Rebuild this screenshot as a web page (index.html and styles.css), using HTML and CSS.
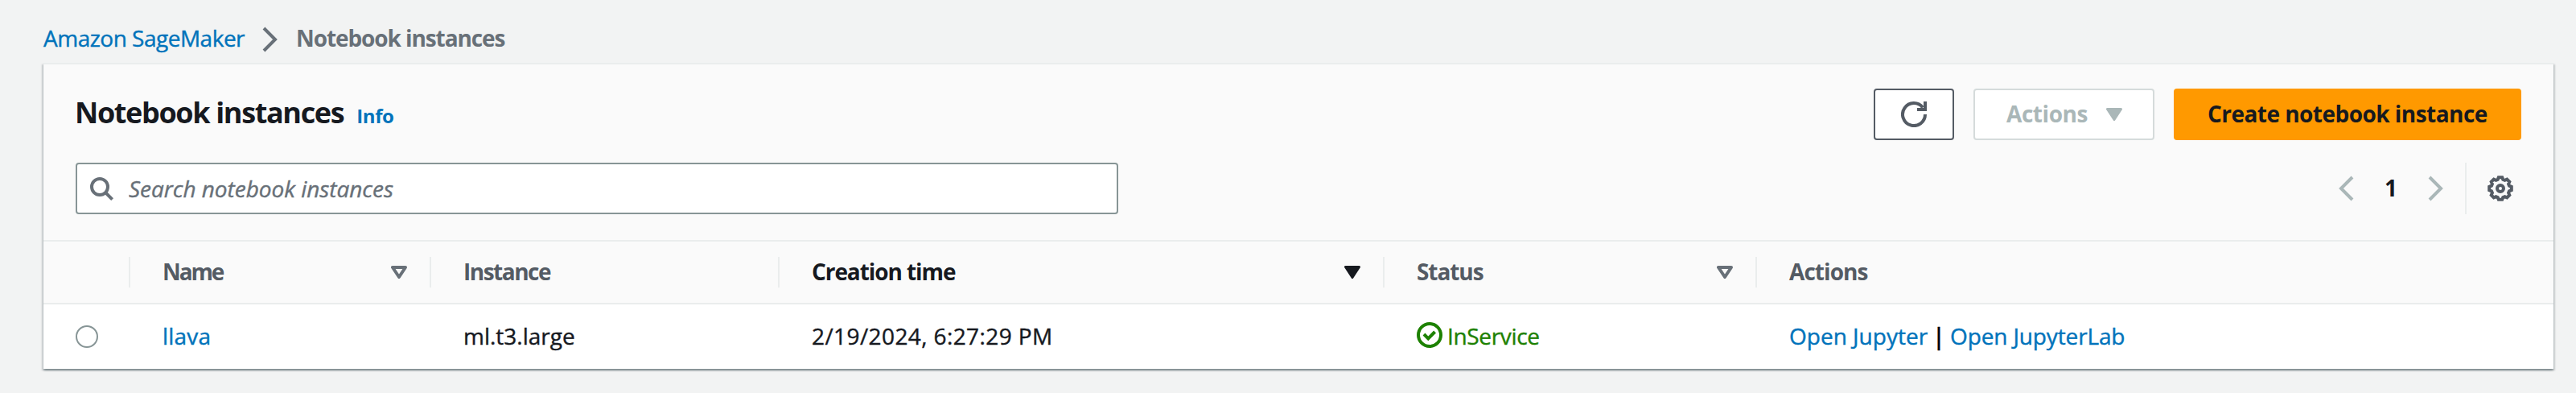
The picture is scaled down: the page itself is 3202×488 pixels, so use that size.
FILE: index.html
```html
<!DOCTYPE html>
<html lang="en">
<head>
<meta charset="utf-8">
<title>Notebook instances</title>
<link rel="stylesheet" href="styles.css">
</head>
<body>
<nav class="crumbs">
  <a class="crumb-link" href="#">Amazon SageMaker</a>
  <svg class="crumb-sep" width="20" height="32" viewBox="0 0 20 32"><path d="M3 2l14 14L3 30"/></svg>
  <span class="crumb-current">Notebook instances</span>
</nav>
<main class="panel">
  <header class="panel-head">
    <div class="title-row">
      <h1 class="title">Notebook instances</h1>
      <a class="info" href="#">Info</a>
      <div class="buttons">
        <button class="btn btn-refresh" aria-label="Refresh"><svg width="32" height="32" viewBox="0 0 32 32"><path d="M30 16A14 14 0 1 1 27 7.4M30 0v10H20"/></svg></button>
        <button class="btn btn-actions" disabled><span>Actions</span><svg width="20" height="16" viewBox="0 0 20 16"><path d="M1.5 1.5h17L10 14.5z"/></svg></button>
        <button class="btn btn-create"><span>Create notebook instance</span></button>
      </div>
    </div>
    <div class="tools-row">
      <label class="search">
        <svg width="32" height="32" viewBox="0 0 32 32"><circle cx="14" cy="14" r="10"/><path d="M21 21l8.6 8.6"/></svg>
        <input class="search-input" type="text" placeholder="Search notebook instances">
      </label>
      <div class="pager">
        <svg class="arrow" width="20" height="32" viewBox="0 0 20 32"><path d="M17 2L3 16l14 14"/></svg>
        <span class="page">1</span>
        <svg class="arrow" width="20" height="32" viewBox="0 0 20 32"><path d="M3 2l14 14L3 30"/></svg>
      </div>
      <div class="prefs">
        <svg width="32" height="32" viewBox="-16 -16 32 32"><path d="M13.8 2.2L11 3.3 10.1 5.5 11.3 8.2 8.2 11.3 5.5 10.1 3.3 11 2.2 13.8H-2.2L-3.3 11-5.5 10.1-8.2 11.3-11.3 8.2-10.1 5.5-11 3.3-13.8 2.2V-2.2L-11-3.3-10.1-5.5-11.3-8.2-8.2-11.3-5.5-10.1-3.3-11-2.2-13.8H2.2L3.3-11 5.5-10.1 8.2-11.3 11.3-8.2 10.1-5.5 11-3.3 13.8-2.2z"/><circle r="4"/></svg>
      </div>
    </div>
  </header>
  <div class="grid grid-head">
    <div class="th"></div>
    <div class="th"><span class="t-name">Name</span><svg class="sort" width="20" height="16" viewBox="0 0 20 16"><path d="M2 2h16l-8 12z"/></svg></div>
    <div class="th"><span class="t-instance">Instance</span></div>
    <div class="th th-sorted"><span class="t-created">Creation time</span><svg class="sort sort-on" width="20" height="16" viewBox="0 0 20 16"><path d="M1.5 1.5h17L10 14.5z"/></svg></div>
    <div class="th"><span class="t-status">Status</span><svg class="sort" width="20" height="16" viewBox="0 0 20 16"><path d="M2 2h16l-8 12z"/></svg></div>
    <div class="th"><span class="t-actions">Actions</span></div>
  </div>
  <div class="grid grid-row">
    <div class="td td-radio"><span class="radio"></span></div>
    <div class="td"><a class="link v-name" href="#">llava</a></div>
    <div class="td"><span>ml.t3.large</span></div>
    <div class="td"><span class="v-created">2/19/2024, 6:27:29 PM</span></div>
    <div class="td td-status"><svg width="32" height="32" viewBox="0 0 32 32"><circle cx="16" cy="16" r="14"/><path d="M9 15l5.3 5.3 8.3-8.3"/></svg><span class="v-status">InService</span></div>
    <div class="td"><a class="link" href="#">Open Jupyter</a><span class="bar">|</span><a class="link v-lab" href="#">Open JupyterLab</a></div>
  </div>
</main>
</body>
</html>
```

FILE: styles.css
```css
* { box-sizing: border-box; }

body {
  margin: 0;
  height: 488px;
  padding: 28px 28px 0 54px;
  overflow: hidden;
  background: #f2f3f3;
  color: #16191f;
  font: 28px/38px "Open Sans", "Noto Sans", sans-serif;
}

a { color: #0073bb; text-decoration: none; }
svg { display: block; flex: none; fill: none; stroke-width: 4; }

.crumbs { display: flex; align-items: center; height: 40px; padding-bottom: 2px; }
.crumb-link { width: 271px; letter-spacing: -0.5px; white-space: nowrap; -webkit-text-stroke: .4px; }
.crumb-sep { margin-top: 3px; stroke: #687078; }
.crumb-current { margin-left: 23px; color: #687078; font-weight: 700; letter-spacing: -1.09px; }

.panel {
  height: 380px;
  margin-top: 10px;
  border-top: 2px solid #eaeded;
  background: #fff;
  box-shadow: 0 2px 2px rgba(0, 28, 36, .3), 2px 2px 2px rgba(0, 28, 36, .15), -2px 2px 2px rgba(0, 28, 36, .15);
}

.panel-head { height: 220px; padding: 30px 40px 0; border-bottom: 2px solid #eaeded; background: #fafafa; }
.title-row { display: flex; align-items: baseline; height: 64px; }
.title { margin: 0 0 0 -1px; font-size: 36px; line-height: 60px; font-weight: 700; letter-spacing: -1.36px; }
.info { margin-left: 16px; font-size: 24px; font-weight: 700; letter-spacing: -.4px; }

.buttons { display: flex; align-self: flex-start; gap: 24px; margin-left: auto; }
.btn {
  display: flex;
  align-items: center;
  height: 64px;
  padding: 0;
  border: 2px solid #545b64;
  border-radius: 4px;
  background: #fff;
  color: #16191f;
  font: 700 28px/38px "Open Sans", "Noto Sans", sans-serif;
}
.btn span { padding-bottom: 2px; white-space: nowrap; }
.btn-refresh { width: 100px; justify-content: center; stroke: #545b64; }
.btn-actions { width: 225px; padding: 0 38px 0 39px; justify-content: space-between; border-color: #d5dbdb; color: #aab7b8; letter-spacing: -.43px; }
.btn-actions svg { fill: #aab7b8; stroke: #aab7b8; stroke-width: 3; stroke-linejoin: round; }
.btn-create { width: 432px; padding-left: 40px; border-color: #f90; background: #f90; letter-spacing: -.54px; }

.tools-row { display: flex; align-items: center; height: 64px; margin-top: 28px; }
.search { display: flex; align-items: center; width: 1296px; height: 64px; padding-left: 14px; border: 2px solid #879596; border-radius: 4px; background: #fff; }
.search svg { stroke: #687078; }
.search-input { flex: 1; height: 56px; margin-left: 18px; padding: 0; border: 0; outline: 0; background: none; font: italic 28px/38px "Open Sans", "Noto Sans", sans-serif; letter-spacing: -.04px; -webkit-text-stroke: .4px; }
.search-input::placeholder { color: #687078; opacity: 1; }

.pager { display: flex; align-items: center; margin-left: auto; }
.arrow { stroke: #aab7b8; }
.page { width: 90px; padding-bottom: 2px; text-align: center; font-weight: 700; }
.prefs { display: flex; align-items: center; height: 64px; margin-left: 27px; padding: 0 10px 0 26px; border-left: 2px solid #eaeded; }
.prefs svg { stroke: #545b64; }

.grid { display: grid; grid-template-columns: 108px 374px 433px 752px 463px 1fr; }
.grid-head { height: 78px; align-items: center; border-bottom: 2px solid #eaeded; background: #fafafa; }
.th { display: flex; align-items: center; justify-content: space-between; height: 38px; padding: 0 28px 0 40px; border-right: 2px solid #eaeded; color: #545b64; font-weight: 700; }
.th:last-child { border-right: 0; }
.th span { padding-bottom: 2px; white-space: nowrap; }
.th-sorted { color: #16191f; }
.sort { stroke: #687078; stroke-linejoin: round; }
.sort-on { fill: #16191f; stroke: #16191f; stroke-width: 3; }
.t-name { letter-spacing: -2.1px; }
.t-instance { letter-spacing: -1.49px; }
.t-created { letter-spacing: -1.08px; }
.t-status { letter-spacing: -1.07px; }
.t-actions { letter-spacing: -.93px; }

.grid-row { height: 80px; -webkit-text-stroke: .4px; }
.td { display: flex; align-items: center; padding: 0 0 2px 40px; white-space: nowrap; }
.td-radio { padding-bottom: 0; }
.radio { width: 28px; height: 28px; border: 2px solid #879596; border-radius: 50%; background: #fff; }
.td-status { color: #1d8102; }
.td-status svg { margin-top: -2px; stroke: #1d8102; }
.v-name { letter-spacing: .2px; }
.v-created { letter-spacing: .4px; }
.v-status { margin-left: 6px; letter-spacing: -.34px; }
.v-lab { letter-spacing: -.14px; }
.bar { width: 28px; color: #000; font-weight: 600; text-align: center; }
```
